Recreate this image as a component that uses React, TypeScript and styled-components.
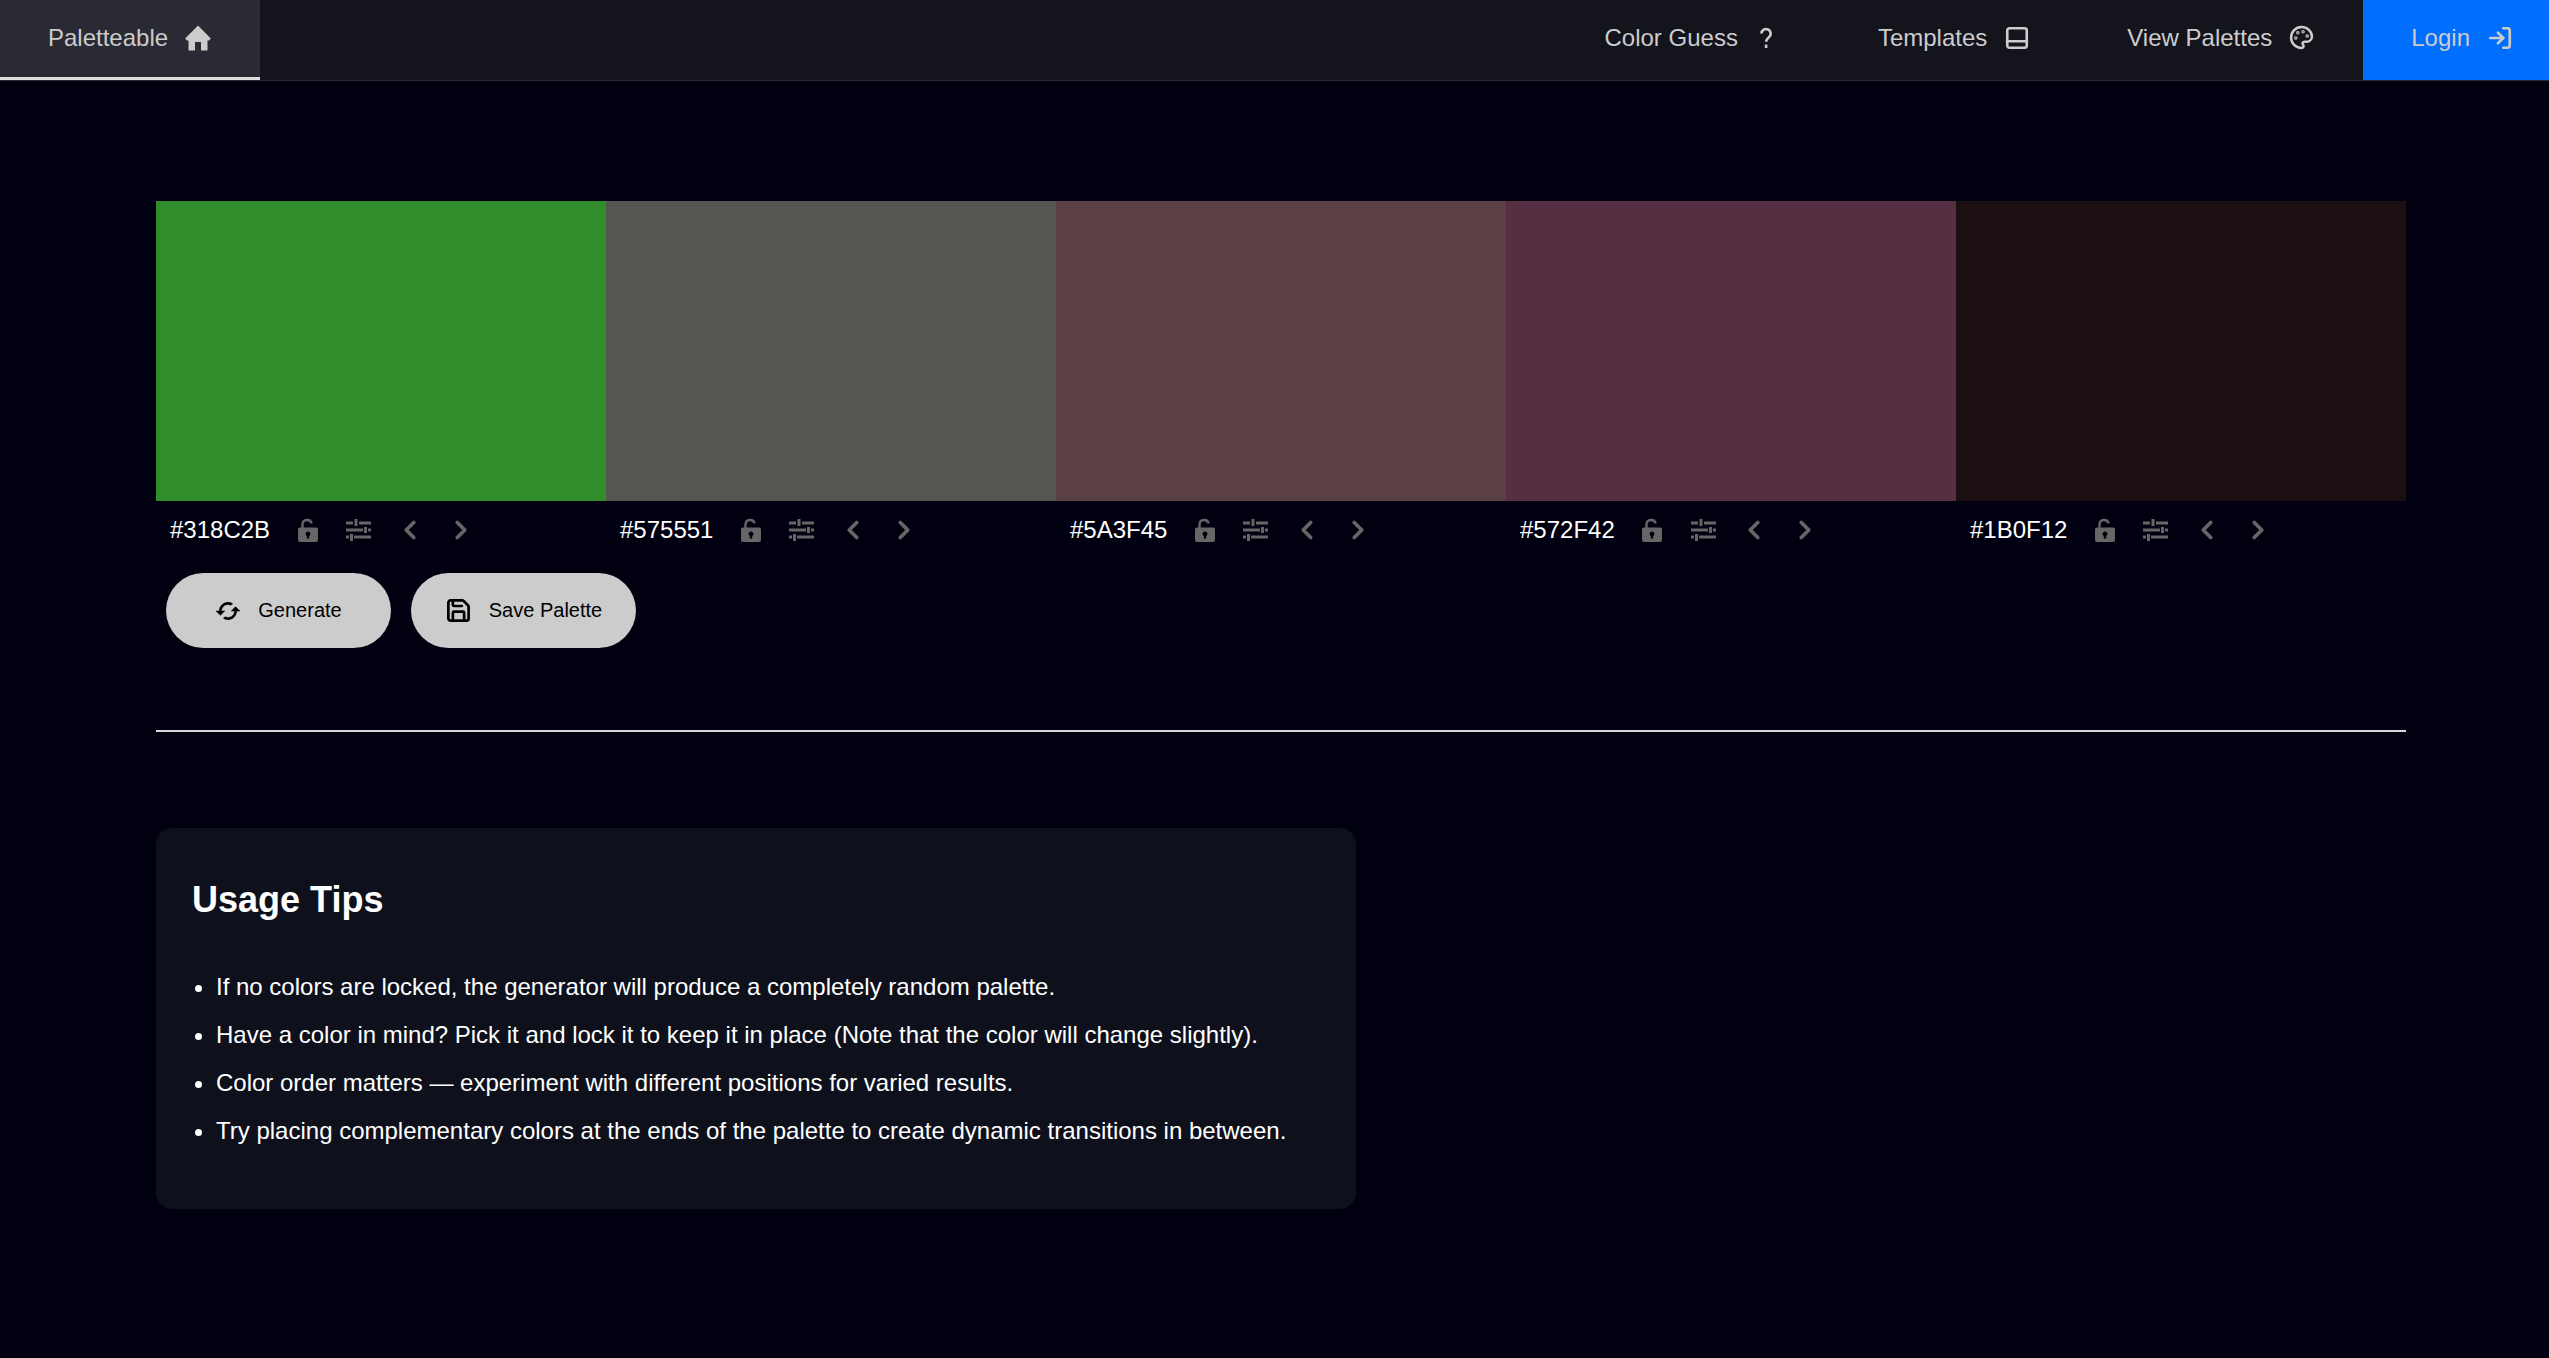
import React from 'react'
import styled, { createGlobalStyle } from 'styled-components'
import { ChevronLeft, ChevronRight, LogIn, PanelBottom, Palette, Save } from 'lucide-react'

const palette = ['#318C2B', '#575551', '#5A3F45', '#572F42', '#1B0F12']

const tips = [
  'If no colors are locked, the generator will produce a completely random palette.',
  'Have a color in mind? Pick it and lock it to keep it in place (Note that the color will change slightly).',
  'Color order matters — experiment with different positions for varied results.',
  'Try placing complementary colors at the ends of the palette to create dynamic transitions in between.',
]

const HomeIcon = () => (
  <svg width='26' height='26' viewBox='0 0 26 26' fill='currentColor'>
    <path d='M13 .5 25.800 13.400 24 15.500H22.500V25.500H16V17H10V25.500H3.500V15.500H2L.2 13.400Z' />
  </svg>
)

const QuestionIcon = () => (
  <svg width='26' height='24' viewBox='0 0 26 24' fill='none' stroke='currentColor' strokeWidth='2.6'>
    <path d='M6.500 7.500a4.600 4.600 0 1 1 7.600 3.600c-1.700 1.400-3 2.400-3 4.600' />
    <path d='M11.100 18.500v3.500' />
  </svg>
)

const LockOpenIcon = () => (
  <svg width='20' height='24' viewBox='0 0 20 24'>
    <path d='M4.500 10V6.500a4.700 4.700 0 0 1 9.200-1.200' fill='none' stroke='currentColor' strokeWidth='2.400' />
    <path
      fillRule='evenodd'
      fill='currentColor'
      d='M2 9.500H18a2 2 0 0 1 2 2V22a2 2 0 0 1-2 2H2a2 2 0 0 1-2-2V11.500a2 2 0 0 1 2-2ZM10 13.500a2.400 2.400 0 0 0-1.200 4.500V20.500h2.400V18a2.400 2.400 0 0 0-1.200-4.500Z'
    />
  </svg>
)

const TuneIcon = () => (
  <svg width='25' height='22' viewBox='0 0 25 22' fill='none' stroke='currentColor' strokeWidth='3'>
    <path d='M0 4H7M10 0V7M13 4H25' />
    <path d='M0 11H17M19.500 8V14M22 11H25' />
    <path d='M0 18H3M5.500 15V22M8 18H25' />
  </svg>
)

const CachedIcon = () => (
  <svg width='26' height='26' viewBox='0 0 24 24' fill='currentColor' stroke='currentColor' strokeWidth='0.5'>
    <path d='M19 8l-4 4h3c0 3.310-2.690 6-6 6-1.010 0-1.970-.25-2.800-.7l-1.460 1.460C8.970 19.540 10.430 20 12 20c4.420 0 8-3.580 8-8h3l-4-4zM6 12c0-3.310 2.690-6 6-6 1.010 0 1.970.25 2.800.7l1.460-1.460C15.030 4.460 13.570 4 12 4c-4.420 0-8 3.580-8 8H1l4 4 4-4H6z' />
  </svg>
)

const App: React.FC = () => {
  return (
    <>
      <GlobalStyle />
      <Navbar>
        <NavItem $active>
          Paletteable
          <HomeIcon />
        </NavItem>
        <NavRight>
          <NavItem>
            Color Guess
            <QuestionIcon />
          </NavItem>
          <NavItem>
            Templates
            <PanelBottom size={26} strokeWidth={2.4} />
          </NavItem>
          <NavItem>
            View Palettes
            <Palette size={25} strokeWidth={2.4} />
          </NavItem>
          <LoginItem>
            Login
            <LogIn size={26} strokeWidth={2.4} />
          </LoginItem>
        </NavRight>
      </Navbar>
      <Main>
        <Swatches>
          {palette.map((hex) => (
            <SwatchColumn key={hex}>
              <Swatch $color={hex} />
              <SwatchControls>
                <HexLabel>{hex}</HexLabel>
                <IconButton>
                  <LockOpenIcon />
                </IconButton>
                <IconButton>
                  <TuneIcon />
                </IconButton>
                <IconButton>
                  <ChevronLeft size={30} strokeWidth={3} />
                </IconButton>
                <IconButton>
                  <ChevronRight size={30} strokeWidth={3} />
                </IconButton>
              </SwatchControls>
            </SwatchColumn>
          ))}
        </Swatches>
        <Actions>
          <PillButton>
            <CachedIcon />
            Generate
          </PillButton>
          <PillButton>
            <Save size={27} strokeWidth={2.4} />
            Save Palette
          </PillButton>
        </Actions>
        <Divider />
        <TipsCard>
          <TipsTitle>Usage Tips</TipsTitle>
          <TipsList>
            {tips.map((tip) => (
              <li key={tip}>{tip}</li>
            ))}
          </TipsList>
        </TipsCard>
      </Main>
    </>
  )
}

export default App

const GlobalStyle = createGlobalStyle`
    html, body {
        margin: 0;
        background: #000010;
    }
    body {
        min-height: 100vh;
        font-family: "Liberation Sans", Arial, sans-serif;
        color: white;
    }
`

const Navbar = styled.nav`
    height: 81px;
    box-sizing: border-box;
    display: flex;
    justify-content: space-between;
    background: #14141d;
    border-bottom: 1px solid #2a2a32;
`

const NavRight = styled.div`
    display: flex;
`

const NavItem = styled.a<{ $active?: boolean }>`
    display: flex;
    align-items: center;
    gap: 17px;
    height: 80px;
    box-sizing: border-box;
    padding: 0 49px 2px 48px;
    font-size: 24px;
    color: #cccccc;
    background: ${({ $active }) => ($active ? '#2a2a34' : 'transparent')};
    border-bottom: 3px solid ${({ $active }) => ($active ? '#dddddd' : 'transparent')};
`

const LoginItem = styled(NavItem)`
    padding-right: 36px;
    background: #006eff;
`

const Main = styled.main`
    padding: 120px 143px 0 156px;
`

const Swatches = styled.div`
    display: grid;
    grid-template-columns: repeat(5, 450px);
`

const SwatchColumn = styled.div`
    display: flex;
    flex-direction: column;
`

const Swatch = styled.div<{ $color: string }>`
    height: 300px;
    background: ${({ $color }) => $color};
`

const SwatchControls = styled.div`
    height: 58px;
    display: flex;
    align-items: center;
    padding-left: 14px;
`

const HexLabel = styled.span`
    font-size: 24px;
    color: white;
    margin-right: 12px;
`

const IconButton = styled.span`
    width: 51px;
    display: flex;
    align-items: center;
    justify-content: center;
    color: #666666;
`

const Actions = styled.div`
    display: flex;
    gap: 20px;
    margin: 14px 0 0 10px;
`

const PillButton = styled.button`
    width: 225px;
    height: 75px;
    display: flex;
    align-items: center;
    justify-content: center;
    gap: 17px;
    border: none;
    border-radius: 38px;
    background: #cccccc;
    color: #000000;
    font-family: inherit;
    font-size: 20px;
`

const Divider = styled.hr`
    width: 2250px;
    height: 2px;
    margin: 82px 0 96px;
    border: none;
    background: #d8d8d8;
`

const TipsCard = styled.section`
    width: 1200px;
    box-sizing: border-box;
    padding: 36px 36px 54px;
    border-radius: 16px;
    background: #0e111c;
`

const TipsTitle = styled.h2`
    margin: 0 0 27px;
    font-size: 36px;
    line-height: 72px;
    font-weight: bold;
`

const TipsList = styled.ul`
    margin: 0;
    padding-left: 24px;
    font-size: 24px;
    line-height: 48px;
`
